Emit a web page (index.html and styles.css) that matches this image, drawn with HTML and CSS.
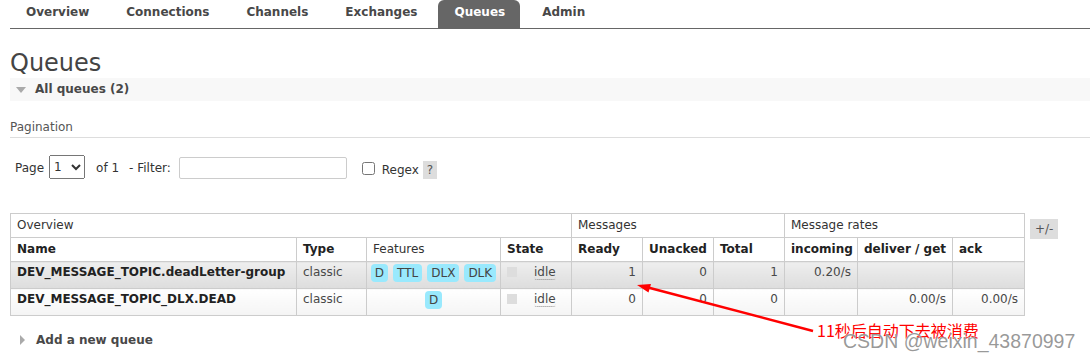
FILE: index.html
```html
<!DOCTYPE html>
<html>
<head>
  <title>RabbitMQ Management</title>
  <link rel="stylesheet" href="styles.css">
</head>
<body>
  <div class="menu">
    <ul class="tabs">
      <li><a href="#/">Overview</a></li>
      <li><a href="#/connections">Connections</a></li>
      <li><a href="#/channels">Channels</a></li>
      <li><a href="#/exchanges">Exchanges</a></li>
      <li class="selected"><a href="#/queues">Queues</a></li>
      <li><a href="#/users">Admin</a></li>
    </ul>
  </div>

  <div class="main">
    <h1>Queues</h1>
    <div class="section">
      <h2><span class="tri-down"></span>All queues (2)</h2>
      <h3>Pagination</h3>
      <div class="filter">
        <label>Page</label>
        <select class="page-select"><option>1</option></select>
        <span class="of">of 1</span>
        <label class="filter-label">- Filter:</label>
        <input type="text" class="filter-input">
        <input type="checkbox" class="regex-box">
        <label class="regex-label">Regex</label>
        <span class="help">?</span>
      </div>

      <div class="table-wrap">
        <table class="list">
          <colgroup>
            <col style="width: 286px">
            <col style="width: 70px">
            <col style="width: 134px">
            <col style="width: 71px">
            <col style="width: 71px">
            <col style="width: 71px">
            <col style="width: 71px">
            <col style="width: 73px">
            <col style="width: 95px">
            <col style="width: 72px">
          </colgroup>
          <thead>
            <tr class="group">
              <th colspan="4">Overview</th>
              <th colspan="3">Messages</th>
              <th colspan="3">Message rates</th>
            </tr>
            <tr>
              <th class="sort">Name</th>
              <th class="sort">Type</th>
              <th>Features</th>
              <th class="sort">State</th>
              <th class="sort">Ready</th>
              <th class="sort">Unacked</th>
              <th class="sort">Total</th>
              <th class="sort">incoming</th>
              <th class="sort">deliver / get</th>
              <th class="sort">ack</th>
            </tr>
          </thead>
          <tbody>
            <tr class="alt1">
              <td class="name">DEV_MESSAGE_TOPIC.deadLetter-group</td>
              <td>classic</td>
              <td><div class="features"><abbr>D</abbr><abbr>TTL</abbr><abbr>DLX</abbr><abbr>DLK</abbr></div></td>
              <td><span class="key"></span><abbr class="state">idle</abbr></td>
              <td class="r">1</td>
              <td class="r">0</td>
              <td class="r">1</td>
              <td class="r">0.20/s</td>
              <td class="r"></td>
              <td class="r"></td>
            </tr>
            <tr class="alt2">
              <td class="name">DEV_MESSAGE_TOPIC_DLX.DEAD</td>
              <td>classic</td>
              <td><div class="features"><abbr>D</abbr></div></td>
              <td><span class="key"></span><abbr class="state">idle</abbr></td>
              <td class="r">0</td>
              <td class="r">0</td>
              <td class="r">0</td>
              <td class="r"></td>
              <td class="r">0.00/s</td>
              <td class="r">0.00/s</td>
            </tr>
          </tbody>
        </table>
        <span class="plus-minus">+/-</span>
      </div>
    </div>

    <div class="section-hidden">
      <h2><span class="tri-right"></span>Add a new queue</h2>
    </div>
  </div>

  <!-- annotation pasted over the screenshot -->
  <svg class="arrow" width="1090" height="359" viewBox="0 0 1090 359">
    <line x1="813" y1="331" x2="648" y2="287.5" stroke="#f00" stroke-width="2.5"/>
    <polygon points="637,285 651,284 648.5,292.5" fill="#f00"/>
  </svg>
  <div class="note">11秒后自动下去被消费</div>
  <div class="watermark">CSDN @weixin_43870997</div>
</body>
</html>
```

FILE: styles.css
```css
body {
  margin: 0;
  font: 12px "DejaVu Sans", Verdana, sans-serif;
  color: #484848;
  background: #fff;
}

.menu {
  padding-left: 10px;
}

.tabs {
  display: flex;
  gap: 6px;
  margin: 0;
  padding: 0;
  list-style: none;
  border-bottom: 1px solid #666;
}

.tabs li a {
  display: block;
  padding: 5px 15px 9px 16px;
  line-height: 14px;
  font-weight: bold;
  color: #484848;
  text-decoration: none;
  border-radius: 6px 6px 0 0;
}

.tabs li.selected a {
  background: #666;
  color: #fff;
}

.main {
  padding-left: 10px;
}

h1 {
  margin: 19px 0 0;
  font-size: 24px;
  line-height: 30px;
  font-weight: normal;
  color: #444;
}

h2 {
  margin: 0;
  height: 23px;
  line-height: 23px;
  font-size: 12px;
  font-weight: bold;
  color: #484848;
  display: flex;
  align-items: center;
}

.section h2 {
  background: #f8f8f8;
  padding-left: 6px;
}

.tri-down {
  width: 0;
  height: 0;
  border-left: 5px solid transparent;
  border-right: 5px solid transparent;
  border-top: 6px solid #aaa;
  margin-right: 9px;
}

.tri-right {
  width: 0;
  height: 0;
  border-top: 5px solid transparent;
  border-bottom: 5px solid transparent;
  border-left: 5px solid #aaa;
  margin-right: 11px;
}

h3 {
  margin: 19px 0 0;
  padding-bottom: 3px;
  font-size: 12px;
  line-height: 14px;
  font-weight: normal;
  color: #555;
  border-bottom: 1px solid #ddd;
}

.filter {
  display: flex;
  align-items: center;
  height: 24px;
  margin-top: 17px;
  padding-left: 5px;
  color: #333;
}

.filter label {
  margin-top: 2px;
}

.page-select {
  margin-left: 5px;
  width: 36px;
  height: 24px;
  font: 12px "DejaVu Sans", Verdana, sans-serif;
  color: #333;
}

.of {
  margin: 2px 0 0 11px;
}

.filter-label {
  margin-left: 10px;
}

.filter-input {
  margin: 2px 0 0 8px;
  width: 168px;
  height: 22px;
  box-sizing: border-box;
  border: 1px solid #ccc;
  border-radius: 2px;
}

.regex-box {
  margin: 3px 7px 0 15px;
  width: 13px;
  height: 13px;
}

.filter .regex-label {
  margin-top: 6px;
}

.help {
  margin: 6px 0 0 4px;
  width: 14px;
  height: 18px;
  line-height: 18px;
  text-align: center;
  background: #ddd;
  color: #555;
}

.table-wrap {
  display: flex;
  align-items: flex-start;
  gap: 5px;
  margin-top: 34px;
}

table.list {
  border-collapse: collapse;
  table-layout: fixed;
  width: 1015px;
}

table.list th,
table.list td {
  border: 1px solid #ccc;
  text-align: left;
  vertical-align: top;
  white-space: nowrap;
  overflow: hidden;
}

table.list th {
  padding: 4px 6px 5px;
  line-height: 14px;
  font-weight: normal;
  color: #333;
  background: #fff;
}

table.list th.sort {
  font-weight: bold;
  color: #222;
}

table.list td {
  padding: 2px 6px 0;
  height: 24px;
  line-height: 16px;
  color: #484848;
}

table.list td.name {
  font-weight: bold;
  color: #222;
}

table.list td.r {
  text-align: right;
}

tr.alt1 td {
  background: linear-gradient(#eee, #ddd);
}

tr.alt2 td {
  background: linear-gradient(#fff, #f4f4f4);
}

.features {
  display: flex;
  justify-content: center;
  gap: 5px;
}

.features abbr {
  display: block;
  height: 18px;
  line-height: 18px;
  padding: 0 4px;
  border-radius: 4px;
  background: #99e9fd;
  color: #444;
  text-decoration: none;
}

.key {
  display: inline-block;
  width: 10px;
  height: 10px;
  margin: 3px 17px 0 0;
  vertical-align: top;
  background: #ddd;
}

abbr.state {
  text-decoration: none;
  border-bottom: 1px dotted #888;
  border-radius: 0 0 3px 3px;
}

.plus-minus {
  margin-top: 6px;
  padding: 0 5px;
  height: 20px;
  line-height: 20px;
  background: #ddd;
  color: #555;
}

.section-hidden {
  margin-top: 17px;
}

.section-hidden h2 {
  padding-left: 10px;
  height: 14px;
  line-height: 14px;
}

.arrow {
  position: absolute;
  left: 0;
  top: 0;
  pointer-events: none;
}

.note {
  position: absolute;
  left: 817px;
  top: 321px;
  font: 16px "Noto Sans CJK SC", sans-serif;
  line-height: 18px;
  color: #f00;
}

.watermark {
  position: absolute;
  left: 843px;
  top: 331px;
  font: 19.5px "Liberation Sans", Arial, sans-serif;
  line-height: 21px;
  color: rgba(120, 120, 120, 0.75);
  text-shadow: 0 0 1px #fff;
  white-space: nowrap;
}
```
